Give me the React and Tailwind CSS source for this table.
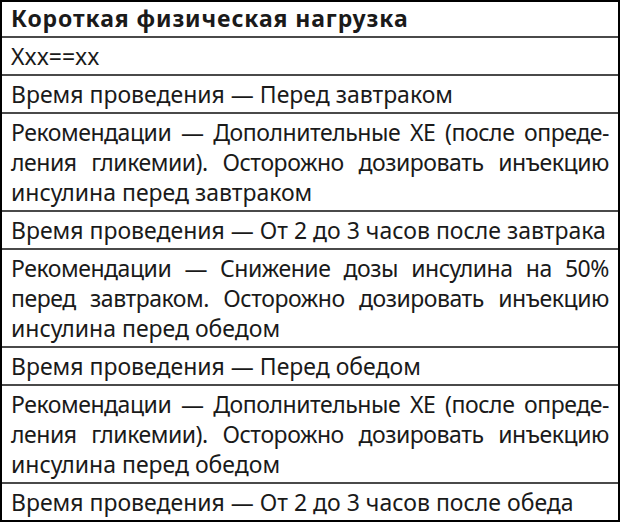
const rows = [
  { lines: ['Xxx==xx'] },
  { lines: ['Время проведения — Перед завтраком'] },
  {
    lines: [
      'Рекомендации — Дополнительные ХЕ (после опреде-',
      'ления гликемии). Осторожно дозировать инъекцию',
      'инсулина перед завтраком',
    ],
  },
  { lines: ['Время проведения — От 2 до 3 часов после завтрака'] },
  {
    lines: [
      'Рекомендации — Снижение дозы инсулина на 50%',
      'перед завтраком. Осторожно дозировать инъекцию',
      'инсулина перед обедом',
    ],
  },
  { lines: ['Время проведения — Перед обедом'] },
  {
    lines: [
      'Рекомендации — Дополнительные ХЕ (после опреде-',
      'ления гликемии). Осторожно дозировать инъекцию',
      'инсулина перед обедом',
    ],
  },
  { lines: ['Время проведения — От 2 до 3 часов после обеда'] },
];

export default function App() {
  return (
    <div className="w-[620px] h-[524px] overflow-hidden bg-white font-['Noto_Sans',sans-serif] text-[#1a1a1a]">
      <div className="border-2 border-black">
        <div className="px-[9px] pt-[1px] pb-[2px] leading-[31px] text-[23px] font-bold tracking-[0.9px] border-b-2 border-[#4a4a4a]">
          Короткая физическая нагрузка
        </div>
        {rows.map((r, i) => (
          <div
            key={i}
            className={
              'px-[9px] py-[3px] text-[23px] leading-[30px] whitespace-nowrap ' +
              (i < rows.length - 1 ? 'border-b-2 border-[#4a4a4a]' : '')
            }
          >
            {r.lines.map((l, j) => (
              <div
                key={j}
                className={
                  j < r.lines.length - 1
                    ? 'text-justify [text-align-last:justify] tracking-[-0.45px] [word-spacing:-3px]'
                    : ''
                }
              >
                {l}
              </div>
            ))}
          </div>
        ))}
      </div>
    </div>
  );
}
